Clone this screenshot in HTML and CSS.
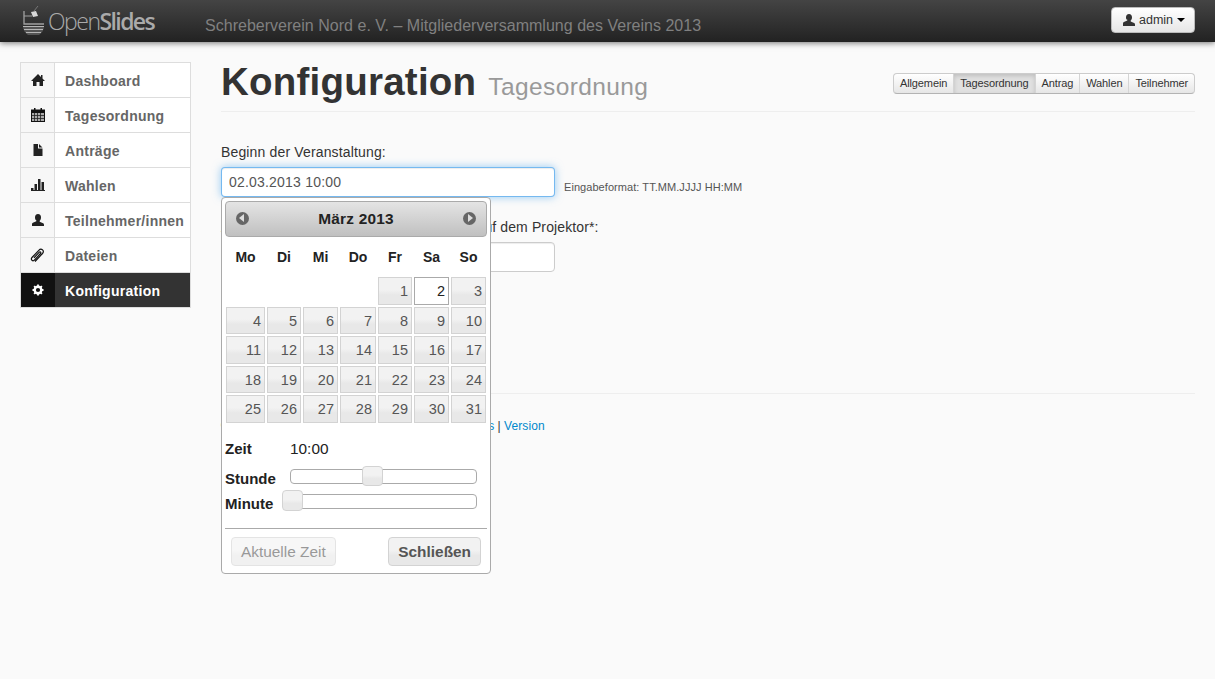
FILE: index.html
```html
<!DOCTYPE html>
<html lang="de">
<head>
    <meta charset="UTF-8">
    <title>Konfiguration – OpenSlides</title>
    <link rel="stylesheet" href="styles.css">
</head>
<body>
    <header class="navbar">
        <a class="brand" href="#">
            <svg class="brand-icon" width="26" height="34" viewBox="0 0 26 34">
                <path d="M2 7v13h20" fill="none" stroke="#a0a0a0" stroke-width="1.300"/>
                <path d="M2 12h8" stroke="#a0a0a0" stroke-width="1"/>
                <path d="M9 8l5-1 2 5-5 1z" fill="#d8d8d8"/>
                <path d="M12 7l4-5" stroke="#777" stroke-width="1"/>
                <path d="M1 22h21c0 4-2 7-5 9H6c-3-2-5-5-5-9z" fill="#555"/>
                <path d="M1 22.500h21M2 25.500h19M4 28.500h15" stroke="#b5b5b5" stroke-width="1"/>
            </svg>
            <span class="brand-open">Open</span><span class="brand-slides">Slides</span>
        </a>
        <span class="event-title">Schreberverein Nord e. V. – Mitgliederversammlung des Vereins 2013</span>
        <button class="user-btn">
            <svg width="12" height="13" viewBox="0 0 12 13"><path d="M6 0c1.900 0 3 1.400 3 3.400 0 1.400-.6 2.500-1.300 3.200v1l3.400 1.500c.6.300.9.800.9 1.400V12H0v-2.500c0-.6.300-1.100.9-1.400l3.400-1.500v-1C3.600 5.900 3 4.800 3 3.400 3 1.400 4.100 0 6 0z" fill="#333"/></svg>
            admin
            <span class="caret"></span>
        </button>
    </header>

    <div class="main">
        <nav class="sidebar">
            <a class="side-item" href="#">
                <span class="side-icon"><svg width="14" height="14" viewBox="0 0 14 14"><path d="M7 1L0 8h2v5h3.500V9h3v4H12V8h2l-2.500-2.500V2H10v2z" fill="#222"/></svg></span>
                <span class="side-label">Dashboard</span>
            </a>
            <a class="side-item" href="#">
                <span class="side-icon"><svg width="14" height="14" viewBox="0 0 14 14"><path d="M0 1.500h14V14H0z" fill="#111"/><path d="M3 0h1.500v2H3zM9.500 0H11v2H9.500z" fill="#111"/><path d="M1 5h12v8H1z" fill="#aaa"/><path d="M1 7.500h12M1 10.500h12M3.500 5v8M6.500 5v8M9.500 5v8" stroke="#222" stroke-width=".8"/></svg></span>
                <span class="side-label">Tagesordnung</span>
            </a>
            <a class="side-item" href="#">
                <span class="side-icon"><svg width="14" height="14" viewBox="0 0 14 14"><path d="M2.500 1H7v4.500h4.500V13h-9zM8 1l3.500 3.500H8z" fill="#222"/></svg></span>
                <span class="side-label">Anträge</span>
            </a>
            <a class="side-item" href="#">
                <span class="side-icon"><svg width="14" height="14" viewBox="0 0 14 14"><path d="M0 12h14v1H0zM0 10h2.500v2H0zM3.500 6H6v6H3.500zM7 1h2.500v11H7zM10.500 4H13v8h-2.500z" fill="#222"/></svg></span>
                <span class="side-label">Wahlen</span>
            </a>
            <a class="side-item" href="#">
                <span class="side-icon"><svg width="14" height="14" viewBox="0 0 14 14"><path d="M7 1c2 0 3 1.500 3 3.500 0 1.500-.6 2.600-1.300 3.300v1l3.400 1.500c.6.300.9.800.9 1.400V13H1v-1.800c0-.6.300-1.100.9-1.400l3.400-1.500v-1C4.600 7.100 4 6 4 4.500 4 2.500 5 1 7 1z" fill="#222"/></svg></span>
                <span class="side-label">Teilnehmer/innen</span>
            </a>
            <a class="side-item" href="#">
                <span class="side-icon"><svg width="15" height="15" viewBox="0 0 15 15"><path d="M5 13.500l7.500-8c1.300-1.500 1-3-.1-3.800-1.100-.9-2.500-.6-3.600.6L2 9.500c-1 1.100-.8 2.200 0 2.800.8.700 1.800.5 2.600-.4L10.500 5.500c.5-.6.400-1.100 0-1.400-.4-.3-.9-.3-1.400.2L4 9.800" fill="none" stroke="#111" stroke-width="1.200"/></svg></span>
                <span class="side-label">Dateien</span>
            </a>
            <a class="side-item active" href="#">
                <span class="side-icon"><svg width="14" height="14" viewBox="0 0 14 14"><circle cx="7" cy="7" r="3.300" fill="none" stroke="#fff" stroke-width="2.400"/><path d="M7 1.500v2M7 10.500v2M1.500 7h2M10.500 7h2M3.100 3.100l1.400 1.400M9.500 9.500l1.400 1.400M3.100 10.900l1.400-1.400M9.500 4.500l1.400-1.400" stroke="#fff" stroke-width="1.800"/></svg></span>
                <span class="side-label">Konfiguration</span>
            </a>
        </nav>

        <section class="content">
            <div class="page-header">
                <h1>Konfiguration <small>Tagesordnung</small></h1>
                <div class="btn-group">
                    <a class="sub-btn" href="#">Allgemein</a>
                    <a class="sub-btn current" href="#">Tagesordnung</a>
                    <a class="sub-btn" href="#">Antrag</a>
                    <a class="sub-btn" href="#">Wahlen</a>
                    <a class="sub-btn" href="#">Teilnehmer</a>
                </div>
            </div>

            <form class="config-form">
                <label class="field-label" for="start">Beginn der Veranstaltung:</label>
                <div class="field-row">
                    <input class="text-input focused" id="start" type="text" value="02.03.2013 10:00">
                    <span class="help">Eingabeformat: TT.MM.JJJJ HH:MM</span>

                    <div class="datepicker">
                        <div class="dp-header">
                            <span class="dp-nav"><span class="arrow-left"></span></span>
                            <span class="dp-title">März 2013</span>
                            <span class="dp-nav"><span class="arrow-right"></span></span>
                        </div>
                        <div class="dp-grid dp-days">
                            <span>Mo</span><span>Di</span><span>Mi</span><span>Do</span><span>Fr</span><span>Sa</span><span>So</span>
                        </div>
                        <div class="dp-grid dp-cells">
                            <span class="blank"></span><span class="blank"></span><span class="blank"></span><span class="blank"></span>
                            <a>1</a><a class="today">2</a><a>3</a>
                            <a>4</a><a>5</a><a>6</a><a>7</a><a>8</a><a>9</a><a>10</a>
                            <a>11</a><a>12</a><a>13</a><a>14</a><a>15</a><a>16</a><a>17</a>
                            <a>18</a><a>19</a><a>20</a><a>21</a><a>22</a><a>23</a><a>24</a>
                            <a>25</a><a>26</a><a>27</a><a>28</a><a>29</a><a>30</a><a>31</a>
                        </div>
                        <div class="time-row time-now">
                            <span class="time-label">Zeit</span>
                            <span class="time-value">10:00</span>
                        </div>
                        <div class="time-row time-hour">
                            <span class="time-label">Stunde</span>
                            <div class="slider"><span class="handle handle-hour"></span></div>
                        </div>
                        <div class="time-row time-minute">
                            <span class="time-label">Minute</span>
                            <div class="slider"><span class="handle handle-minute"></span></div>
                        </div>
                        <div class="dp-buttons">
                            <button class="dp-btn disabled" type="button">Aktuelle Zeit</button>
                            <button class="dp-btn primary" type="button">Schließen</button>
                        </div>
                    </div>
                </div>

                <label class="field-label second" for="title">Anzeige der Einträge der Tagesordnung auf dem Projektor*:</label>
                <div class="field-row">
                    <input class="text-input" id="title" type="text">
                </div>
            </form>

            <footer class="page-footer">
                © Copyright 2011-2013 OpenSlides | <a href="#">Lizenzhinweis</a> | <a class="version-link" href="#">Version</a>
            </footer>
        </section>
    </div>
</body>
</html>
```

FILE: styles.css
```css
* {
    box-sizing: border-box;
}

html, body {
    height: 100%;
}

body {
    margin: 0;
    background-color: #fafafa;
    color: #333;
    font-family: "Liberation Sans", Arial, sans-serif;
    font-size: 14px;
    line-height: 20px;
    overflow: hidden;
}

a {
    text-decoration: none;
}

/* top bar */
.navbar {
    display: flex;
    align-items: center;
    height: 42px;
    padding: 0 20px 0 22px;
    background: linear-gradient(to bottom, #444, #222);
    box-shadow: 0 1px 6px rgba(0, 0, 0, 0.55);
}

.brand {
    display: flex;
    align-items: center;
    width: 183px;
    color: #aaa;
    font-family: "Open Sans", sans-serif;
    font-size: 23px;
    letter-spacing: -1.5px;
}

.brand-icon {
    flex: none;
}

.brand-open {
    font-weight: 300;
}

.brand-slides {
    font-weight: 600;
    letter-spacing: -1.6px;
}

.event-title {
    flex: 1;
    padding-top: 10px;
    color: #808080;
    font-size: 16px;
    letter-spacing: 0.02px;
}

.user-btn {
    display: flex;
    align-items: center;
    gap: 4px;
    width: 84px;
    height: 26px;
    margin-top: -2px;
    padding: 0 0 0 11px;
    border: 1px solid #bbb;
    border-radius: 4px;
    background: linear-gradient(to bottom, #fff, #e6e6e6);
    color: #333;
    font-family: inherit;
    font-size: 12.5px;
}

.caret {
    width: 0;
    height: 0;
    border-top: 4px solid #000;
    border-left: 4px solid transparent;
    border-right: 4px solid transparent;
}

/* page */
.main {
    display: flex;
    gap: 30px;
    padding: 20px 20px 0;
}

.sidebar {
    flex: none;
    width: 171px;
    border: 1px solid #ddd;
    background: #fff;
    align-self: flex-start;
}

.side-item {
    display: flex;
    height: 35px;
    border-bottom: 1px solid #ddd;
    color: #666;
    font-size: 14px;
    font-weight: bold;
}

.side-item:last-child {
    border-bottom: none;
    height: 34px;
}

.side-icon {
    display: flex;
    align-items: center;
    justify-content: center;
    width: 34px;
    flex: none;
    border-right: 1px solid #ddd;
    background: #f7f7f7;
}

.side-label {
    padding-left: 10px;
    padding-top: 1px;
    letter-spacing: 0.27px;
    line-height: 35px;
    white-space: nowrap;
}

.side-item.active {
    background: #333;
    color: #fff;
}

.side-item.active .side-icon {
    background: #111;
    border-right-color: #111;
}

.content {
    flex: 1;
    min-width: 0;
}

.page-header {
    display: flex;
    align-items: flex-start;
    justify-content: space-between;
    height: 50px;
    border-bottom: 1px solid #eee;
}

h1 {
    margin: 0;
    color: #333;
    font-size: 38.5px;
    letter-spacing: 0.23px;
    line-height: 40px;
    font-weight: bold;
    white-space: nowrap;
}

h1 small {
    margin-left: 1px;
    color: #999;
    font-size: 24.5px;
    letter-spacing: 0.4px;
    font-weight: normal;
}

.btn-group {
    display: flex;
    margin-top: 11px;
    height: 21px;
    border: 1px solid #ccc;
    border-bottom-color: #b3b3b3;
    border-radius: 4px;
    overflow: hidden;
    background: linear-gradient(to bottom, #fff, #e6e6e6);
}

.sub-btn {
    padding: 0 6px;
    border-left: 1px solid #d5d5d5;
    color: #333;
    font-size: 11px;
    letter-spacing: -0.12px;
    line-height: 19px;
}

.sub-btn:first-child {
    border-left: none;
}

.sub-btn.current {
    background: #e0e0e0;
    box-shadow: inset 0 2px 4px rgba(0, 0, 0, 0.15);
}

/* form */
.config-form {
    padding-top: 30px;
}

.field-label {
    display: block;
    margin-bottom: 4px;
    letter-spacing: 0.15px;
    line-height: 21px;
    white-space: nowrap;
}

.field-label.second {
    margin-top: 20px;
    letter-spacing: 0.115px;
}

.field-row {
    position: relative;
    display: flex;
    align-items: flex-end;
}

.text-input {
    width: 334px;
    height: 30px;
    padding: 4px 7px;
    border: 1px solid #ccc;
    border-radius: 4px;
    background: #fff;
    color: #555;
    font-family: inherit;
    font-size: 14px;
    letter-spacing: 0.2px;
    box-shadow: inset 0 1px 1px rgba(0, 0, 0, 0.075);
}

.text-input.focused {
    border-color: rgba(82, 168, 236, 0.8);
    box-shadow: inset 0 1px 1px rgba(0, 0, 0, 0.075), 0 0 8px rgba(82, 168, 236, 0.6);
}

.help {
    margin-left: 9px;
    color: #555;
    font-size: 11px;
    letter-spacing: 0.06px;
    line-height: 20px;
}

/* date picker */
.datepicker {
    position: absolute;
    z-index: 10;
    left: 0;
    top: 30px;
    width: 270px;
    height: 377px;
    padding: 3px;
    border: 1px solid #aaa;
    border-radius: 4px;
    background: #fff;
    color: #222;
    font-size: 15.4px;
}

.dp-header {
    display: flex;
    align-items: center;
    justify-content: space-between;
    height: 36px;
    padding: 0 10px;
    border: 1px solid #aaa;
    border-radius: 4px;
    background: linear-gradient(to bottom, #e4e4e4, #c0c0c0);
    font-weight: bold;
    letter-spacing: 0.2px;
}

.dp-nav {
    display: flex;
    align-items: center;
    justify-content: center;
    width: 13px;
    height: 13px;
    margin-bottom: 2px;
    border-radius: 50%;
    background: #666;
}

.arrow-left {
    border-right: 5px solid #ddd;
    border-top: 4px solid transparent;
    border-bottom: 4px solid transparent;
    margin-right: 2px;
}

.arrow-right {
    border-left: 5px solid #ddd;
    border-top: 4px solid transparent;
    border-bottom: 4px solid transparent;
    margin-left: 2px;
}

.dp-grid {
    display: grid;
    grid-template-columns: 39px 34px 35px 36px 34px 35px 35px;
    column-gap: 2px;
    margin-left: 1px;
}

.dp-days {
    height: 40px;
    text-align: center;
    font-size: 14px;
    font-weight: bold;
    line-height: 40px;
}

.dp-cells {
    grid-template-rows: 28px 27px 28px 27px 28px;
    row-gap: 2px;
}

.dp-cells a {
    padding-right: 3px;
    border: 1px solid #d3d3d3;
    background: linear-gradient(to bottom, #f2f2f2 45%, #e8e8e8 65%);
    color: #555;
    font-size: 14.5px;
    line-height: 27px;
    text-align: right;
}

.dp-cells a.today {
    border-color: #aaa;
    background: #fff;
    color: #212121;
}

.time-row {
    display: flex;
    align-items: center;
    font-size: 15.4px;
}

.time-label {
    width: 65px;
    flex: none;
    font-size: 15px;
    font-weight: bold;
}

.time-hour .time-label,
.time-minute .time-label {
    padding-top: 2px;
}

.time-now {
    margin-top: 16px;
    height: 20px;
}

.time-hour {
    margin-top: 9px;
    height: 20px;
}

.time-minute {
    margin-top: 5px;
    height: 20px;
}

.slider {
    position: relative;
    align-self: flex-start;
    width: 187px;
    height: 15px;
    margin-top: 1px;
    border: 1px solid #aaa;
    border-radius: 4px;
    background: #fff;
}

.handle {
    position: absolute;
    width: 21px;
    border: 1px solid #d3d3d3;
    border-radius: 4px;
    background: linear-gradient(to bottom, #f2f2f2 45%, #e8e8e8 65%);
}

.handle-hour {
    top: -4px;
    left: 71px;
    height: 20px;
}

.handle-minute {
    top: -5px;
    left: -9px;
    height: 21px;
}

.dp-buttons {
    display: flex;
    justify-content: space-between;
    margin-top: 15px;
    padding: 8px 6px 0;
    border-top: 1px solid #aaa;
}

.dp-btn {
    height: 29px;
    padding: 0 9px;
    border: 1px solid #d3d3d3;
    border-radius: 4px;
    background: linear-gradient(to bottom, #f2f2f2 45%, #e8e8e8 65%);
    color: #555;
    font-family: inherit;
    font-size: 15.4px;
}

.dp-btn.disabled {
    opacity: 0.6;
}

.dp-btn.primary {
    font-weight: bold;
}

/* footer */
.page-footer {
    margin-top: 121px;
    padding-top: 22px;
    border-top: 1px solid #eee;
    font-size: 12px;
    line-height: 20px;
}

.page-footer a {
    color: #0088cc;
}

.version-link {
    letter-spacing: 0.1px;
}
```
